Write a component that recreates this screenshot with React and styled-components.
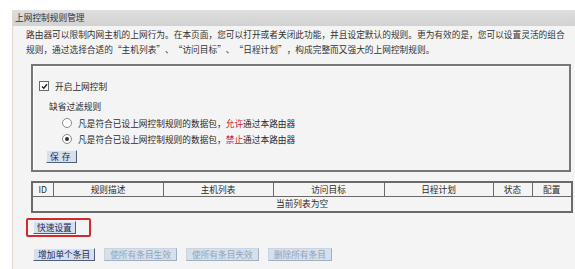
import React from 'react';
import styled, { createGlobalStyle } from 'styled-components';

const GlobalStyle = createGlobalStyle`
  html, body {
    margin: 0;
    padding: 0;
    background: #ffffff;
  }
  body {
    font-family: "Noto Sans CJK SC", "Noto Sans", sans-serif;
    font-size: 8.7px;
    color: #2b2b2b;
  }
`;

const Page = styled.div`
  width: 575px;
  height: 269px;
  overflow: hidden;
  padding: 10px 0 0 12px;
  box-sizing: border-box;
`;

const Panel = styled.div`
  border-left: 1px solid #e4d9c6;
  background: #f4f4f4;
  height: 100%;
`;

const Header = styled.div`
  height: 16px;
  line-height: 16px;
  background: linear-gradient(#dedede, #d2d2d2);
  padding-left: 2px;
  color: #333;
  white-space: nowrap;
`;

const Desc = styled.div`
  padding: 1px 0 0 13px;
  line-height: 15px;
  color: #333;
  white-space: nowrap;
`;

// SimSun-style full-width quotation mark
const Q = styled.span`
  display: inline-block;
  width: 1em;
  text-align: ${p => (p.$open ? 'right' : 'left')};
`;

const Box = styled.div`
  margin: 7px 0 0 18px;
  width: 540px;
  height: 108px;
  box-sizing: border-box;
  border: 2px solid #767676;
  box-shadow: inset 1px 1px 0 #ffffff;
  padding: 12px 0 0 6px;
`;

const Row = styled.div`
  display: flex;
  align-items: center;
  gap: ${p => p.$gap || 6}px;
  height: ${p => p.$h || 16}px;
  padding-left: ${p => p.$indent || 0}px;
`;

const Check = styled.span`
  width: 8px;
  height: 8px;
  border: 1px solid #6a6a6a;
  background: #fff;
  display: flex;
  align-items: center;
  justify-content: center;
`;

const Radio = styled.span`
  width: 8px;
  height: 8px;
  border-radius: 50%;
  border: 1px solid #8a8a8a;
  background: #fff;
  display: flex;
  align-items: center;
  justify-content: center;
  &::after {
    content: '';
    width: 4px;
    height: 4px;
    border-radius: 50%;
    background: ${p => (p.$on ? '#333' : 'transparent')};
  }
`;

const Red = styled.span`
  color: #c41a1a;
`;

const Btn = styled.button`
  font-family: inherit;
  font-size: 8.7px;
  height: 13px;
  padding: 0 ${p => p.$pad || 3}px;
  line-height: 11px;
  letter-spacing: ${p => p.$ls || 0}px;
  background: #d6e0ea;
  color: ${p => (p.disabled ? '#8ea4bd' : '#1b2a5c')};
  border: 1px solid;
  border-color: ${p => (p.disabled ? '#c9d4df #9fb0c2 #9fb0c2 #c9d4df' : '#f0f4f8 #4d5f78 #4d5f78 #f0f4f8')};
  box-sizing: border-box;
  cursor: pointer;
  white-space: nowrap;
`;

const Table = styled.table`
  margin: 9px 0 0 18px;
  width: 540px;
  border-collapse: collapse;
  border: 2px solid #6a6a6a;
  table-layout: fixed;
  th, td {
    border: 1px solid #6a6a6a;
    height: 13px;
    padding: 0;
    font-weight: normal;
    line-height: 12px;
    white-space: nowrap;
  }
  td {
    text-align: center;
  }
`;

const QuickWrap = styled.div`
  margin: 5px 0 0 13px;
  width: 65px;
  height: 19px;
  box-sizing: border-box;
  border: 2px solid #d02a30;
  border-radius: 2px;
  display: flex;
  align-items: center;
  padding-left: 5px;
`;

const Actions = styled.div`
  display: flex;
  gap: 9px;
  margin: 11px 0 0 20px;
`;

const cols = [
  ['ID', 21],
  ['规则描述', 110],
  ['主机列表', 110],
  ['访问目标', 111],
  ['日程计划', 109],
  ['状态', 39],
  ['配置', 40],
];

const quoted = ['主机列表', '访问目标', '日程计划'];

export default function App() {
  return (
    <>
      <GlobalStyle />
      <Page>
        <Panel>
          <Header>上网控制规则管理</Header>
          <Desc>
            路由器可以限制内网主机的上网行为。在本页面，您可以打开或者关闭此功能，并且设定默认的规则。更为有效的是，您可以设置灵活的组合
            <br />
            规则，通过选择合适的
            {quoted.map((w, i) => (
              <React.Fragment key={w}>
                <Q $open>“</Q>{w}<Q>”</Q>{i < quoted.length - 1 ? '、' : ''}
              </React.Fragment>
            ))}
            ，构成完整而又强大的上网控制规则。
          </Desc>
          <Box>
            <Row $gap={6}>
              <Check>
                <svg width="7" height="7" viewBox="0 0 7 7">
                  <path d="M1 3.5 L2.8 5.3 L6 1.2" stroke="#222" strokeWidth="1.4" fill="none" />
                </svg>
              </Check>
              <span>开启上网控制</span>
            </Row>
            <Row $indent={10} $h={17} style={{ marginTop: 4 }}>缺省过滤规则</Row>
            <Row $indent={23} $gap={6}>
              <Radio />
              <span>凡是符合已设上网控制规则的数据包，<Red>允许</Red>通过本路由器</span>
            </Row>
            <Row $indent={23} $gap={6}>
              <Radio $on />
              <span>凡是符合已设上网控制规则的数据包，<Red>禁止</Red>通过本路由器</span>
            </Row>
            <Row $indent={7} $h={15} style={{ marginTop: 2 }}>
              <Btn $pad={3} $ls={3}>保存</Btn>
            </Row>
          </Box>
          <Table>
            <colgroup>
              {cols.map(([t, w]) => (
                <col key={t} style={{ width: w }} />
              ))}
            </colgroup>
            <thead>
              <tr>
                {cols.map(([t]) => (
                  <th key={t}>{t}</th>
                ))}
              </tr>
            </thead>
            <tbody>
              <tr>
                <td colSpan={7} style={{ height: 14 }}>当前列表为空</td>
              </tr>
            </tbody>
          </Table>
          <QuickWrap>
            <Btn $pad={3}>快速设置</Btn>
          </QuickWrap>
          <Actions>
            <Btn $pad={4}>增加单个条目</Btn>
            <Btn $pad={5} disabled>使所有条目生效</Btn>
            <Btn $pad={5} disabled>使所有条目失效</Btn>
            <Btn $pad={5} disabled>删除所有条目</Btn>
          </Actions>
        </Panel>
      </Page>
    </>
  );
}
